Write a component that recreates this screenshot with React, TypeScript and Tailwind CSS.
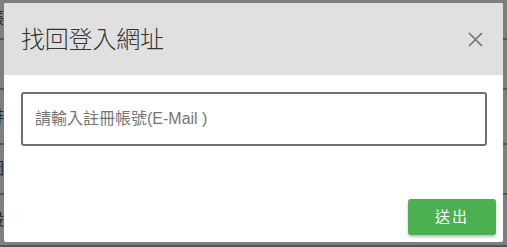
import React, { useState } from "react";

const BG_ROWS = [
  { h: "h-[40px]", label: "帳" },
  { h: "h-[50px]", label: "" },
  { h: "h-[55px]", label: "排" },
  { h: "h-[50px]", label: "圖" },
  { h: "h-[52px]", label: "設" },
];

export default function App() {
  const [email, setEmail] = useState("");

  return (
    <div
      className="relative w-[507px] h-[247px] overflow-hidden bg-white"
      style={{ fontFamily: '"Liberation Sans", "Noto Sans CJK TC", sans-serif' }}
    >
      {/* page behind the dialog */}
      <div className="flex flex-col">
        {BG_ROWS.map((r, i) => (
          <div
            key={i}
            className={`${r.h} flex items-center border-b-2 border-[#aaaaaa]`}
          >
            <span className="-ml-[12px] text-[16px] text-[#444]">{r.label}</span>
          </div>
        ))}
      </div>

      {/* overlay + dialog */}
      <div className="absolute inset-0 bg-black/50">
        <div className="absolute left-[4px] top-[3px] w-[499px] h-[239px] flex flex-col bg-white rounded-[2px] overflow-hidden">
          <div className="h-[72px] flex items-center justify-between bg-[#e0e0e0] pl-[17px] pr-[20px]">
            <h2 className="text-[24px] font-light text-[#333] tracking-[-0.2px] leading-none pt-[2px]">
              找回登入網址
            </h2>
            <button className="w-[16px] h-[16px] flex items-center justify-center text-[#707070]">
              <svg width="15" height="15" viewBox="0 0 15 15">
                <path
                  d="M1 1L14 14M14 1L1 14"
                  stroke="currentColor"
                  strokeWidth="1.6"
                  fill="none"
                />
              </svg>
            </button>
          </div>

          <div className="flex-1 px-[17px] pt-[17px]">
            <input
              value={email}
              onChange={(e) => setEmail(e.target.value)}
              placeholder="請輸入註冊帳號(E-Mail )"
              className="w-[466px] h-[54px] border-2 border-[#6f6f6f] rounded-[3px] px-[12px] text-[16px] text-[#333] placeholder:text-[#757575] outline-none"
            />
          </div>

          <div className="flex justify-end px-[7px] pb-[7px]">
            <button className="w-[88px] h-[36px] rounded-[3px] bg-[#4caf50] text-white text-[15px] tracking-[2px] shadow-[0_2px_3px_rgba(0,0,0,0.25)]">
              送出
            </button>
          </div>
        </div>
      </div>
    </div>
  );
}
